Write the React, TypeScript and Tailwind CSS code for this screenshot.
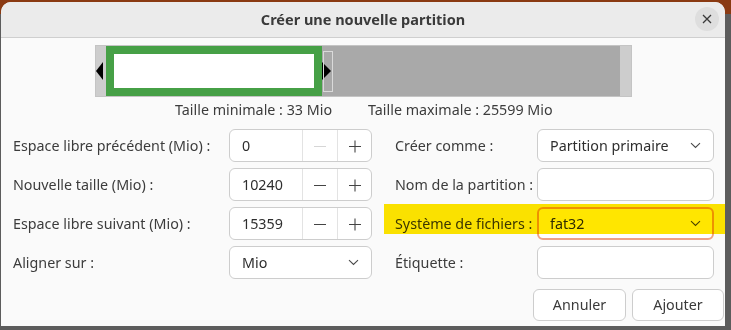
import { ReactNode } from 'react';

const font = { fontFamily: '"Noto Sans", "DejaVu Sans", sans-serif' };

const Chevron = () => (
  <svg width="11" height="7" viewBox="0 0 11 7" className="shrink-0">
    <path d="M1 1.2 L5.5 5.5 L10 1.2" fill="none" stroke="#4a4a4a" strokeWidth="1.1" />
  </svg>
);

const Minus = ({ disabled }: { disabled?: boolean }) => (
  <svg width="14" height="14" viewBox="0 0 14 14">
    <path d="M1 7.5 H13" stroke={disabled ? '#d6d6d6' : '#444'} strokeWidth="1.1" />
  </svg>
);

const Plus = () => (
  <svg width="14" height="14" viewBox="0 0 14 14">
    <path d="M1 7.5 H13 M7 1.5 V13.5" stroke="#444" strokeWidth="1.1" />
  </svg>
);

const Label = ({ children }: { children: ReactNode }) => (
  <div className="flex items-center h-[33px] text-[#3c3c3c]">{children}</div>
);

const SpinBox = ({ value, minusDisabled }: { value: string; minusDisabled?: boolean }) => (
  <div className="flex h-[33px] rounded-[6px] border border-[#cdcdcd] bg-white overflow-hidden">
    <div className="flex flex-1 items-center pl-[12px] text-[#2e2e2e]">{value}</div>
    <div className="flex w-[35px] items-center justify-center border-l border-[#e3e3e3]">
      <Minus disabled={minusDisabled} />
    </div>
    <div className="flex w-[34px] items-center justify-center border-l border-[#e3e3e3]">
      <Plus />
    </div>
  </div>
);

const Select = ({ value, focused }: { value: string; focused?: boolean }) => (
  <div
    className={
      focused
        ? 'flex h-[33px] items-center justify-between rounded-[6px] border-2 border-[#eea185] bg-white pl-[11px] pr-[11px] text-[#2e2e2e]'
        : 'flex h-[33px] items-center justify-between rounded-[6px] border border-[#cdcdcd] bg-white pl-[12px] pr-[12px] text-[#2e2e2e]'
    }
  >
    <span>{value}</span>
    <Chevron />
  </div>
);

const Entry = () => <div className="h-[33px] rounded-[6px] border border-[#cdcdcd] bg-white" />;

export default function App() {
  return (
    <div
      className="w-[731px] h-[330px] pl-[1px] pt-[2px] bg-[linear-gradient(to_bottom,#8a3a12_0px,#8a3a12_14px,#5c5c5c_14px)] text-[14.3px]"
      style={font}
    >
      <div className="relative flex h-[324px] w-[724px] flex-col overflow-hidden rounded-t-[10px] bg-[#fafafa]">
        {/* title bar */}
        <div className="relative flex h-[36px] shrink-0 items-center justify-center border-b border-[#cfcfcf] bg-[#ebebeb]">
          <span className="font-bold text-[14.5px] text-[#3a3a3a]">Créer une nouvelle partition</span>
          <div className="absolute right-[6px] top-[5px] flex h-[24px] w-[24px] items-center justify-center rounded-full bg-[#dedede]">
            <svg width="10" height="10" viewBox="0 0 10 10">
              <path d="M1 1 L9 9 M9 1 L1 9" stroke="#3a3a3a" strokeWidth="1.3" />
            </svg>
          </div>
        </div>

        {/* partition bar */}
        <div className="relative ml-[94px] mt-[7px] flex h-[52px] w-[537px] border border-[#c4c4c4] bg-[#cdcdcd]">
          <div className="w-[10px]" />
          <div className="w-[216px] border-[8px] border-[#46a046] bg-white" />
          <div className="flex-1 bg-[#a9a9a9]" />
          <div className="w-[11px]" />
          <svg className="absolute left-0 top-[15px]" width="8" height="20" viewBox="0 0 8 20">
            <path d="M0 10 L7 1 V19 Z" fill="#000" />
          </svg>
          <svg className="absolute left-[226px] top-[15px]" width="9" height="20" viewBox="0 0 9 20">
            <path d="M9 10 L0 1 V19 Z" fill="#000" />
          </svg>
          <div className="absolute left-[227px] top-[5px] h-[41px] w-[10px] border border-[#dadada]" />
        </div>

        {/* sizes */}
        <div className="mt-[4px] flex h-[18px] items-center text-[#3c3c3c]">
          <span className="ml-[174px] w-[193px]">Taille minimale : 33 Mio</span>
          <span>Taille maximale : 25599 Mio</span>
        </div>

        {/* form */}
        <div className="mt-[10px] grid grid-cols-[216px_143px_23px_142px_177px] gap-y-[6px] pl-[12px]">
          <Label>Espace libre précédent (Mio) :</Label>
          <SpinBox value="0" minusDisabled />
          <div />
          <Label>Créer comme :</Label>
          <Select value="Partition primaire" />

          <Label>Nouvelle taille (Mio) :</Label>
          <SpinBox value="10240" />
          <div />
          <Label>Nom de la partition :</Label>
          <Entry />

          <Label>Espace libre suivant (Mio) :</Label>
          <SpinBox value="15359" />
          <div />
          <Label>Système de fichiers :</Label>
          <Select value="fat32" focused />

          <Label>Aligner sur :</Label>
          <Select value="Mio" />
          <div />
          <Label>Étiquette :</Label>
          <Entry />
        </div>

        {/* buttons */}
        <div className="mt-[10px] flex justify-end gap-[6px] pr-[1px]">
          <div className="flex h-[32px] w-[93px] items-center justify-center rounded-[6px] border border-[#cdcdcd] bg-white text-[#3a3a3a]">
            Annuler
          </div>
          <div className="flex h-[32px] w-[92px] items-center justify-center rounded-[6px] border border-[#cdcdcd] bg-white text-[#3a3a3a]">
            Ajouter
          </div>
        </div>

        {/* highlighter mark */}
        <div className="pointer-events-none absolute left-[383px] top-[202px] h-[30px] w-[341px] bg-[#ffe600] mix-blend-multiply" />
      </div>
    </div>
  );
}
